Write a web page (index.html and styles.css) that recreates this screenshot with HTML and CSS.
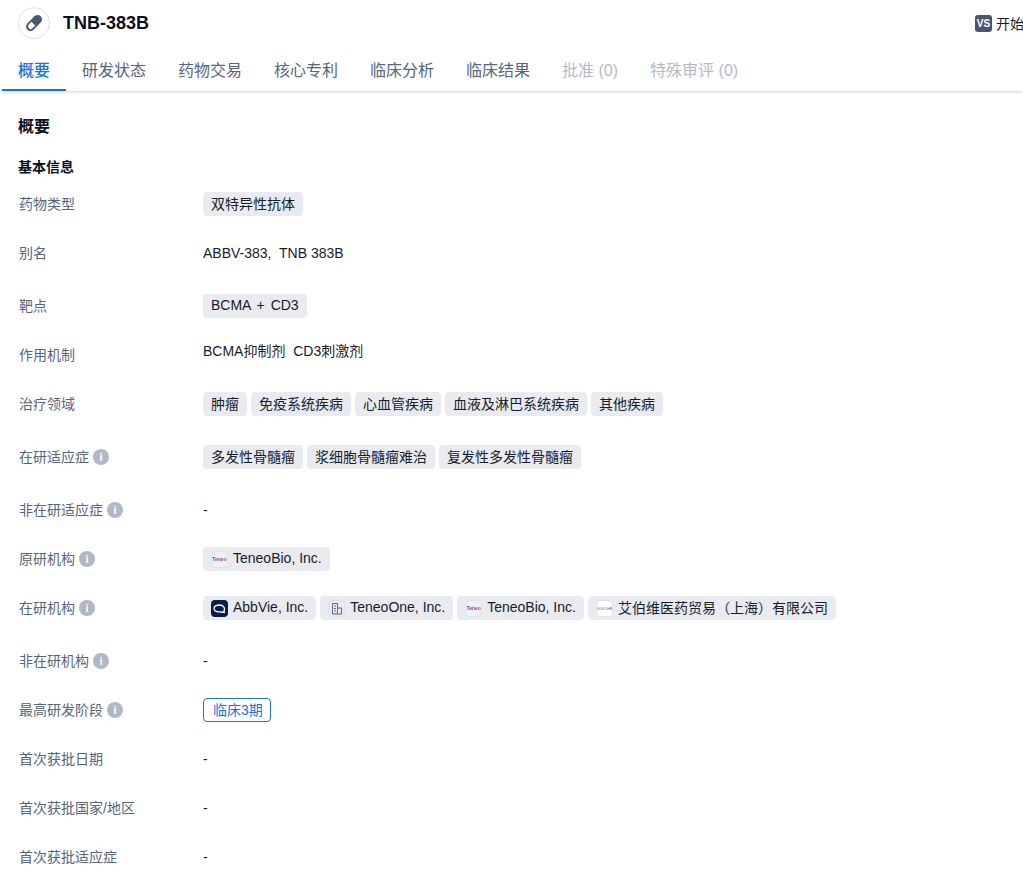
FILE: index.html
```html
<!DOCTYPE html>
<html lang="zh">
<head>
<meta charset="utf-8">
<title>TNB-383B</title>
<link rel="stylesheet" href="styles.css">
</head>
<body>
<header class="head">
  <div class="head-left">
    <span class="drug-icon">
      <svg width="20" height="20" viewBox="0 0 20 20"><g transform="rotate(45 10 10)"><rect x="5.6" y="0.6" width="8.8" height="18.8" rx="4.4" fill="#48566f"/><path d="M7.4 11h5.2v3.8a2.6 2.6 0 0 1-5.2 0z" fill="#fff"/></g></svg>
    </span>
    <h1 class="title">TNB-383B</h1>
  </div>
  <div class="head-right">
    <span class="vs">VS</span><span>开始使用</span>
  </div>
</header>
<nav class="tabs">
  <a class="tab tab-active">概要</a>
  <a class="tab">研发状态</a>
  <a class="tab">药物交易</a>
  <a class="tab">核心专利</a>
  <a class="tab">临床分析</a>
  <a class="tab">临床结果</a>
  <a class="tab tab-off">批准 (0)</a>
  <a class="tab tab-off">特殊审评 (0)</a>
</nav>
<main class="main">
  <h2 class="h2">概要</h2>
  <h3 class="h3">基本信息</h3>
  <div class="row"><div class="label">药物类型</div><div class="val"><span class="tag">双特异性抗体</span></div></div>
  <div class="row row-53"><div class="label">别名</div><div class="val val-text">ABBV-383,&nbsp; TNB 383B</div></div>
  <div class="row"><div class="label">靶点</div><div class="val"><span class="tag tag-wide">BCMA + CD3</span></div></div>
  <div class="row"><div class="label">作用机制</div><div class="val val-text val-up">BCMA抑制剂&nbsp; CD3刺激剂</div></div>
  <div class="row row-53"><div class="label">治疗领域</div><div class="val"><span class="tag">肿瘤</span><span class="tag">免疫系统疾病</span><span class="tag">心血管疾病</span><span class="tag">血液及淋巴系统疾病</span><span class="tag">其他疾病</span></div></div>
  <div class="row row-53"><div class="label">在研适应症<i class="info">i</i></div><div class="val"><span class="tag">多发性骨髓瘤</span><span class="tag">浆细胞骨髓瘤难治</span><span class="tag">复发性多发性骨髓瘤</span></div></div>
  <div class="row"><div class="label">非在研适应症<i class="info">i</i></div><div class="val val-text">-</div></div>
  <div class="row"><div class="label">原研机构<i class="info">i</i></div><div class="val"><span class="tag tag-org"><span class="logo logo-teneo"><span class="logo-word">Teneo</span></span>TeneoBio, Inc.</span></div></div>
  <div class="row row-53"><div class="label">在研机构<i class="info">i</i></div><div class="val">
    <span class="tag tag-org"><span class="logo logo-abbvie"><svg width="13" height="9" viewBox="0 0 13 9"><path d="M6.5 1C3.5 1 1 2.2 1 4.5S3.5 8 6.5 7.8c1.6 0 3 .3 4.8.6-.4-1-.3-1.6 0-2.4.6-1.700-.5-5-4.800-5z" fill="none" stroke="#fff" stroke-width="1.300"/></svg></span>AbbVie, Inc.</span>
    <span class="tag tag-org"><span class="logo logo-build"><svg width="12" height="13" viewBox="0 0 12 13" fill="none" stroke="#5d6a82" stroke-width="1"><path d="M1.500 12V1.500h5V12zM6.500 6h4v6h-4M3 4h2M3 6.500h2M3 9h2"/></svg></span>TeneoOne, Inc.</span>
    <span class="tag tag-org"><span class="logo logo-teneo"><span class="logo-word">Teneo</span></span>TeneoBio, Inc.</span>
    <span class="tag tag-org"><span class="logo logo-white">GOO-HE</span>艾伯维医药贸易（上海）有限公司</span>
  </div></div>
  <div class="row"><div class="label">非在研机构<i class="info">i</i></div><div class="val val-text">-</div></div>
  <div class="row"><div class="label">最高研发阶段<i class="info">i</i></div><div class="val"><span class="tag-phase">临床3期</span></div></div>
  <div class="row"><div class="label">首次获批日期</div><div class="val val-text">-</div></div>
  <div class="row"><div class="label">首次获批国家/地区</div><div class="val val-text">-</div></div>
  <div class="row"><div class="label">首次获批适应症</div><div class="val val-text">-</div></div>
</main>
</body>
</html>
```
FILE: styles.css
```css
* { box-sizing: border-box; }
html, body { margin: 0; height: 889px; overflow: hidden; background: #fff; }
body { font-family: "Liberation Sans", "Noto Sans CJK SC", sans-serif; font-size: 14px; color: #181c2a; }
.head { display: flex; align-items: center; height: 46px; padding: 0 0 0 18px; overflow: hidden; }
.head-left { display: flex; align-items: center; flex: 0 0 957px; }
.drug-icon { display: flex; align-items: center; justify-content: center; width: 32px; height: 32px; border: 1px solid #dfe2ea; border-radius: 50%; }
.title { margin: 0 0 0 13px; font-size: 18px; line-height: 24px; font-weight: 700; color: #0b1020; }
.head-right { display: flex; align-items: center; flex: none; white-space: nowrap; color: #181c2a; }
.vs { display: inline-flex; align-items: center; justify-content: center; width: 17px; height: 17px; margin-right: 4px; border-radius: 3px; background: #48566f; color: #fff; font-size: 10px; font-weight: 700; }
.tabs { display: flex; height: 45px; padding-left: 2px; box-shadow: 0 3px 3px -2px rgba(40, 50, 80, .22); }
.tab { height: 45px; padding: 0 16px; font-size: 16px; line-height: 49px; color: #566580; border-bottom: 2px solid transparent; white-space: nowrap; }
.tab-active { color: #1a73d9; font-weight: 500; border-bottom-color: #1a73d9; }
.tab-off { color: #b4bac7; }
.main { padding: 0 18px; }
.h2 { margin: 0; padding-top: 24px; font-size: 16px; line-height: 24px; font-weight: 700; color: #0b1020; }
.h3 { margin: 0 0 13px; padding-top: 16px; font-size: 14px; line-height: 24px; font-weight: 700; color: #0b1020; }
.row { display: grid; grid-template-columns: 185px 1fr; height: 49px; align-items: start; }
.row-53 { height: 53px; }
.label { display: flex; align-items: center; height: 24px; margin-top: -1px; color: #566580; white-space: nowrap; padding-left: 1px; }
.info { display: inline-flex; align-items: center; justify-content: center; width: 16px; height: 16px; margin: 2px 0 0 4px; border-radius: 50%; background: #b0b7c6; color: #fff; font: 700 11px/16px "Liberation Sans", sans-serif; font-style: normal; }
.val { display: flex; flex-wrap: wrap; gap: 4px; }
.val-text { line-height: 24px; }
.val-up { margin-top: -4px; }
.tag { display: inline-flex; align-items: center; height: 24px; padding: 0 8px 2px; border-radius: 4px; background: #e9ebf0; color: #181c2a; white-space: nowrap; }
.tag-wide { word-spacing: 2px; }
.tag-org { gap: 5px; }
.logo { display: inline-flex; align-items: center; justify-content: center; flex: none; width: 17px; height: 17px; margin-top: 2px; border-radius: 4px; overflow: hidden; }
.logo-teneo { background: #eef0f5; border: 1px solid #dfe2ea; font-size: 5px; font-weight: 700; }
.logo-word { background: linear-gradient(90deg, #4a3f98, #d0405e); -webkit-background-clip: text; background-clip: text; color: transparent; }
.logo-abbvie { background: #071d49; }
.logo-build { background: #e9ebf0; border: 1px solid #dfe2ea; }
.logo-white { background: #fff; border: 1px solid #dfe2ea; color: #555; font-size: 4px; }
.tag-phase { display: inline-flex; align-items: center; height: 24px; padding: 0 7px 2px 9px; border: 1px solid #1a73d9; border-radius: 4px; color: #1a73d9; white-space: nowrap; }
```
